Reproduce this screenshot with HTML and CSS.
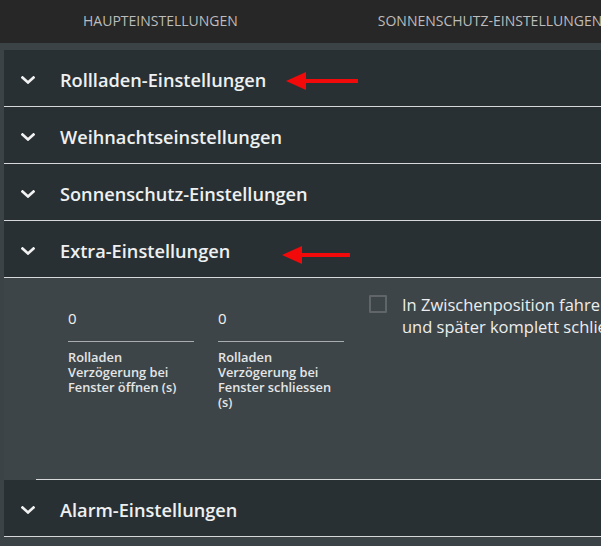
FILE: index.html
```html
<!DOCTYPE html>
<html lang="de">
<head>
<meta charset="utf-8">
<title>Einstellungen</title>
<link rel="stylesheet" href="styles.css">
</head>
<body>
<nav class="tabs">
  <div class="tab tab-main">HAUPTEINSTELLUNGEN</div>
  <div class="tab tab-sun">SONNENSCHUTZ-EINSTELLUNGEN</div>
</nav>

<main class="panels">
  <section class="panel">
    <header class="panel-head">
      <svg class="chev" viewBox="0 0 14 8" width="14" height="8"><path d="M1.5 1.5 L7 6.5 L12.5 1.5" /></svg>
      <span class="panel-title">Rollladen-Einstellungen</span>
      <span class="arrow arrow-a"></span>
    </header>
  </section>
  <section class="panel">
    <header class="panel-head">
      <svg class="chev" viewBox="0 0 14 8" width="14" height="8"><path d="M1.5 1.5 L7 6.5 L12.5 1.5" /></svg>
      <span class="panel-title">Weihnachtseinstellungen</span>
    </header>
  </section>
  <section class="panel">
    <header class="panel-head">
      <svg class="chev" viewBox="0 0 14 8" width="14" height="8"><path d="M1.5 1.5 L7 6.5 L12.5 1.5" /></svg>
      <span class="panel-title">Sonnenschutz-Einstellungen</span>
    </header>
  </section>
  <section class="panel panel-open">
    <header class="panel-head">
      <svg class="chev" viewBox="0 0 14 8" width="14" height="8"><path d="M1.5 1.5 L7 6.5 L12.5 1.5" /></svg>
      <span class="panel-title">Extra-Einstellungen</span>
      <span class="arrow arrow-b"></span>
    </header>
    <div class="panel-body">
      <div class="field">
        <div class="field-value">0</div>
        <div class="field-label">Rolladen Verzögerung bei Fenster öffnen (s)</div>
      </div>
      <div class="field">
        <div class="field-value">0</div>
        <div class="field-label">Rolladen Verzögerung bei Fenster schliessen (s)</div>
      </div>
      <label class="check">
        <span class="check-box"></span>
        <span class="check-text">In Zwischenposition fahren<br>und später komplett schliessen</span>
      </label>
    </div>
  </section>
  <section class="panel">
    <header class="panel-head">
      <svg class="chev" viewBox="0 0 14 8" width="14" height="8"><path d="M1.5 1.5 L7 6.5 L12.5 1.5" /></svg>
      <span class="panel-title">Alarm-Einstellungen</span>
    </header>
  </section>
</main>
</body>
</html>
```

FILE: styles.css
```css
* { box-sizing: border-box; }

html, body {
  margin: 0;
  height: 100%;
  overflow: hidden;
}

body {
  background: #3c4346;
  font-family: "Open Sans", "Noto Sans", sans-serif;
  color: #eceeef;
  width: 900px;
}

/* top tab strip */
.tabs {
  height: 43px;
  background: #272727;
  display: flex;
  align-items: center;
  padding-bottom: 3px;
  margin-bottom: 7px;
}

.tab {
  font-size: 14px;
  font-weight: 500;
  color: #bcbcbc;
  white-space: nowrap;
}

.tab-main { padding-left: 83px; }
.tab-sun { padding-left: 140px; }

/* accordion */
.panels {
  margin-left: 4px;
}

.panel-head {
  position: relative;
  height: 57px;
  padding-top: 4px;
  background: #293034;
  border-bottom: 1px solid #d6d8d9;
  display: flex;
  align-items: center;
}

.chev {
  margin-left: 17px;
  fill: none;
  stroke: #f2f2f2;
  stroke-width: 2.6;
  stroke-linecap: square;
}

.panel-title {
  margin-left: 25px;
  font-size: 18.2px;
  font-weight: 600;
  color: #eef0f1;
}

/* red pointer arrows */
.arrow {
  position: absolute;
  height: 4px;
  background: #f20a0a;
}

.arrow::before {
  content: "";
  position: absolute;
  left: -20px;
  top: -7px;
  border-style: solid;
  border-width: 9px 20px 9px 0;
  border-color: transparent #f20a0a transparent transparent;
}

.arrow-a { left: 302px; width: 52px; top: 29px; }
.arrow-b { left: 298px; width: 48px; top: 32px; }

/* expanded body */
.panel-body {
  position: relative;
  height: 202px;
  background: #3e4548;
  display: flex;
  align-items: flex-start;
  padding: 30px 0 0 64px;
}

.panel-body::after {
  content: "";
  position: absolute;
  left: 32px;
  right: 0;
  bottom: 0;
  height: 1px;
  background: #d6d8d9;
}

.field {
  width: 126px;
  margin-right: 24px;
}

.field-value {
  font-size: 15px;
  height: 34px;
  border-bottom: 1px solid #a9adaf;
  color: #f0f0f0;
}

.field-label {
  margin-top: 8px;
  font-size: 12.8px;
  font-weight: 600;
  line-height: 15px;
  color: #e4e6e7;
}

.check {
  display: flex;
  align-items: flex-start;
  margin-left: 1px;
  margin-top: -13px;
  white-space: nowrap;
}

.check-box {
  width: 18px;
  height: 18px;
  border: 2px solid #5f6568;
  border-radius: 1px;
  flex: none;
  margin-top: 0;
}

.check-text {
  margin-left: 15px;
  margin-top: -1px;
  font-size: 16.5px;
  font-weight: 500;
  line-height: 22px;
  color: #eceeef;
}
```
